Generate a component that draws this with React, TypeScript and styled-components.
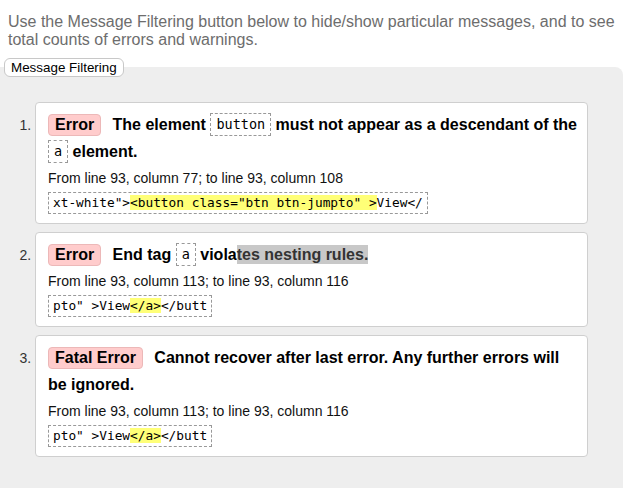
import React from 'react'
import styled, { createGlobalStyle } from 'styled-components'

const GlobalStyle = createGlobalStyle`
    body {
        margin: 0;
        background: #fff;
        font-family: "Liberation Sans", Arial, sans-serif;
    }
`

const Intro = styled('p')`
    margin: 0;
    padding: 13px 8px 0;
    color: #6d6d6d;
    font-size: 16px;
    line-height: 18px;
`

const FilterButton = styled('button')`
    position: relative;
    z-index: 1;
    display: block;
    margin: 9px 0 -10px 4px;
    height: 19px;
    padding: 0 6px;
    background: #fff;
    border: 1px solid #c8c8c8;
    border-radius: 6px;
    color: #000;
    font-family: "Liberation Sans", Arial, sans-serif;
    font-size: 13.4px;
    line-height: 17px;
`

const Results = styled('section')`
    background: #eee;
    border-radius: 0 8px 0 0;
    margin-right: 2px;
    padding: 35px 0 33px;
`

const MessageList = styled('ol')`
    margin: 0;
    padding: 0 35px 0 35px;
`

const MessageItem = styled('li')`
    background: #fff;
    border: 1px solid #cfcfcf;
    border-radius: 4px;
    padding: 8px 10px 9px 12px;
    margin-bottom: 8px;

    &::marker {
        color: #333;
        font-size: 14px;
    }
`

const Message = styled('p')`
    margin: 0;
    color: #000;
    font-size: 16px;
    font-weight: bold;
    line-height: 27px;
`

const Badge = styled('strong')`
    display: inline-block;
    margin-right: 7px;
    padding: 0 6px;
    background: #fcc;
    border: 1px solid #ecb8b8;
    border-radius: 4px;
    line-height: 20px;
`

const Code = styled('code')`
    display: inline-block;
    padding: 0 5px;
    border: 1px dashed #999;
    font-family: "DejaVu Sans Mono", monospace;
    font-size: 13.5px;
    font-weight: normal;
    line-height: 21px;
    vertical-align: 1px;
`

const Selected = styled('span')`
    background: #c8c8c8;
    color: #333;
    padding: 1px 0;
`

const Location = styled('p')`
    margin: 3px 0 0;
    color: #111;
    font-size: 14px;
    line-height: 20px;
`

const Extract = styled('p')`
    display: inline-block;
    margin: 4px 0 0;
    padding: 2px 4px;
    border: 1px dashed #999;
    font-family: "DejaVu Sans Mono", monospace;
    font-size: 12.8px;
    line-height: 16px;
    white-space: pre;
`

const Mark = styled('mark')`
    background: #ff7;
    color: inherit;
`

export default function App() {
    return (
        <>
            <GlobalStyle />
            <Intro>
                Use the Message Filtering button below to hide/show particular messages, and to see
                total counts of errors and warnings.
            </Intro>
            <FilterButton type="button">Message Filtering</FilterButton>
            <Results>
                <MessageList>
                    <MessageItem>
                        <Message>
                            <Badge>Error</Badge> The element <Code>button</Code> must not appear as a
                            descendant of the <Code>a</Code> element.
                        </Message>
                        <Location>From line 93, column 77; to line 93, column 108</Location>
                        <Extract>
                            xt-white"&gt;<Mark>&lt;button class="btn btn-jumpto" &gt;</Mark>View&lt;/
                        </Extract>
                    </MessageItem>
                    <MessageItem>
                        <Message>
                            <Badge>Error</Badge> End tag <Code>a</Code> viola<Selected>tes nesting rules.</Selected>
                        </Message>
                        <Location>From line 93, column 113; to line 93, column 116</Location>
                        <Extract>
                            pto" &gt;View<Mark>&lt;/a&gt;</Mark>&lt;/butt
                        </Extract>
                    </MessageItem>
                    <MessageItem>
                        <Message>
                            <Badge>Fatal Error</Badge> Cannot recover after last error. Any further
                            errors will be ignored.
                        </Message>
                        <Location>From line 93, column 113; to line 93, column 116</Location>
                        <Extract>
                            pto" &gt;View<Mark>&lt;/a&gt;</Mark>&lt;/butt
                        </Extract>
                    </MessageItem>
                </MessageList>
            </Results>
        </>
    )
}
